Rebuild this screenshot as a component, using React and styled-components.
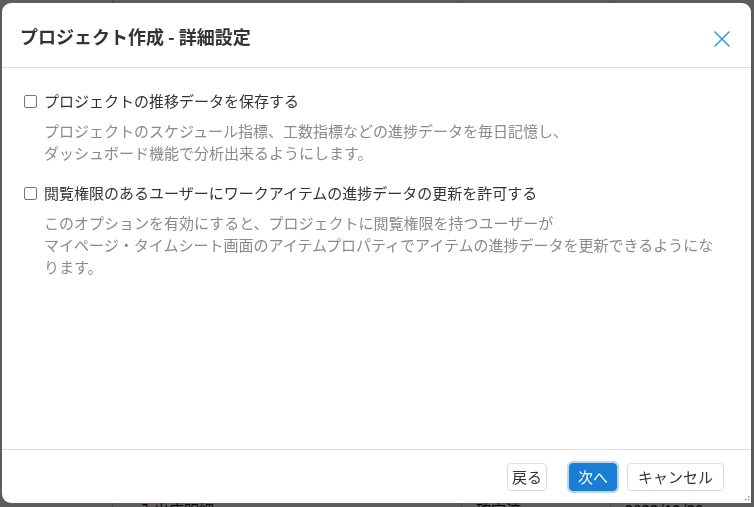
import styled, { createGlobalStyle } from "styled-components";

const GlobalStyle = createGlobalStyle`
  html, body {
    margin: 0;
    padding: 0;
    background: #ffffff;
    font-family: "Noto Sans CJK JP", "Noto Sans", sans-serif;
    overflow: hidden;
  }
`;

// page behind the modal (mostly hidden)
const Page = styled.div`
  height: 507px;
  display: flex;
  flex-direction: column;
  justify-content: flex-end;
  overflow: hidden;
`;
const PageRow = styled.div`
  display: grid;
  grid-template-columns: 113px 349px 149px 1fr;
  height: ${({ $h }) => $h}px;
  flex: none;
  font-size: 15px;
  line-height: 20px;
  color: #111;
`;
const PageCell = styled.div`
  border-right: 1px solid #cfcfcf;
  padding-left: ${({ $pl }) => $pl || 0}px;
  white-space: nowrap;
  &:last-child {
    border-right: none;
  }
`;

const Backdrop = styled.div`
  position: fixed;
  inset: 0;
  background: rgba(0, 0, 0, 0.64);
  display: flex;
  padding: 3px 3px 4px 2px;
  box-sizing: border-box;
`;

const Dialog = styled.div`
  position: relative;
  flex: 1;
  background: #fff;
  border-radius: 9px 9px 0 9px;
  display: flex;
  flex-direction: column;
  overflow: hidden;
`;

const Header = styled.div`
  height: 65px;
  border-bottom: 1px solid #dedede;
  display: flex;
  align-items: center;
  justify-content: space-between;
  padding: 1px 20px 0 18px;
  box-sizing: border-box;
`;
const Title = styled.h2`
  margin: 0;
  font-size: 18px;
  font-weight: 700;
  color: #333;
`;
const CloseButton = styled.button`
  border: none;
  background: none;
  padding: 0;
  width: 18px;
  height: 18px;
  margin-top: 7px;
  cursor: pointer;
  display: flex;
`;

const Body = styled.div`
  flex: 1;
  padding: 22px 30px 0 22px;
`;
const Option = styled.div`
  margin-bottom: 18px;
`;
const CheckRow = styled.label`
  display: flex;
  align-items: center;
  gap: 7px;
  font-size: 15px;
  line-height: 22px;
  color: #333;
`;
const Box = styled.span`
  width: 11px;
  height: 11px;
  border: 1px solid #767676;
  border-radius: 2px;
  background: #fff;
  flex: none;
`;
const Desc = styled.p`
  margin: 8px 0 0 20px;
  font-size: 15px;
  line-height: 22px;
  color: #8a8a8a;
`;

const Footer = styled.div`
  height: 54px;
  border-top: 1px solid #dedede;
  display: flex;
  align-items: center;
  justify-content: flex-end;
  padding: 0 27px 0 0;
  box-sizing: border-box;
`;
const Button = styled.button`
  height: 28px;
  padding: 0 ${({ $pad }) => $pad}px;
  margin-left: ${({ $ml }) => $ml}px;
  font-family: inherit;
  font-size: 15px;
  border-radius: 4px;
  border: 1px solid ${({ $primary }) => ($primary ? "#1a7fd4" : "#dcdcdc")};
  background: ${({ $primary }) => ($primary ? "#1a7fd4" : "#fff")};
  color: ${({ $primary }) => ($primary ? "#fff" : "#333")};
  box-shadow: ${({ $primary }) => ($primary ? "0 0 0 2px #b9d7f0" : "none")};
  cursor: pointer;
`;

const Grip = styled.svg`
  position: absolute;
  right: 1px;
  bottom: 1px;
`;

export default function App() {
  return (
    <>
      <GlobalStyle />
      <Page>
        <PageRow $h={500}>
          <PageCell />
          <PageCell />
          <PageCell />
          <PageCell />
        </PageRow>
        <PageRow $h={7}>
          <PageCell />
          <PageCell $pl={26}>入出庫明細</PageCell>
          <PageCell $pl={14}>確定済</PageCell>
          <PageCell $pl={14}>2023/12/20</PageCell>
        </PageRow>
      </Page>
      <Backdrop>
        <Dialog>
          <Header>
            <Title>プロジェクト作成 - 詳細設定</Title>
            <CloseButton aria-label="閉じる">
              <svg width="18" height="18" viewBox="0 0 18 18">
                <path d="M1.5 1.5 L16.5 16.5 M16.5 1.5 L1.5 16.5" stroke="#3d95db" strokeWidth="1.5" fill="none" />
              </svg>
            </CloseButton>
          </Header>
          <Body>
            <Option>
              <CheckRow>
                <Box />
                プロジェクトの推移データを保存する
              </CheckRow>
              <Desc>
                プロジェクトのスケジュール指標、工数指標などの進捗データを毎日記憶し、
                <br />
                ダッシュボード機能で分析出来るようにします。
              </Desc>
            </Option>
            <Option>
              <CheckRow>
                <Box />
                閲覧権限のあるユーザーにワークアイテムの進捗データの更新を許可する
              </CheckRow>
              <Desc>
                このオプションを有効にすると、プロジェクトに閲覧権限を持つユーザーが
                <br />
                マイページ・タイムシート画面のアイテムプロパティでアイテムの進捗データを更新できるようになります。
              </Desc>
            </Option>
          </Body>
          <Footer>
            <Button $pad={4} $ml={0}>戻る</Button>
            <Button $pad={8} $ml={22} $primary>次へ</Button>
            <Button $pad={10} $ml={10}>キャンセル</Button>
          </Footer>
          <Grip width="8" height="8" viewBox="0 0 8 8">
            <rect x="6" y="2" width="1.5" height="1.5" fill="#999" />
            <rect x="3" y="5" width="1.5" height="1.5" fill="#999" />
            <rect x="6" y="5" width="1.5" height="1.5" fill="#999" />
          </Grip>
        </Dialog>
      </Backdrop>
    </>
  );
}
